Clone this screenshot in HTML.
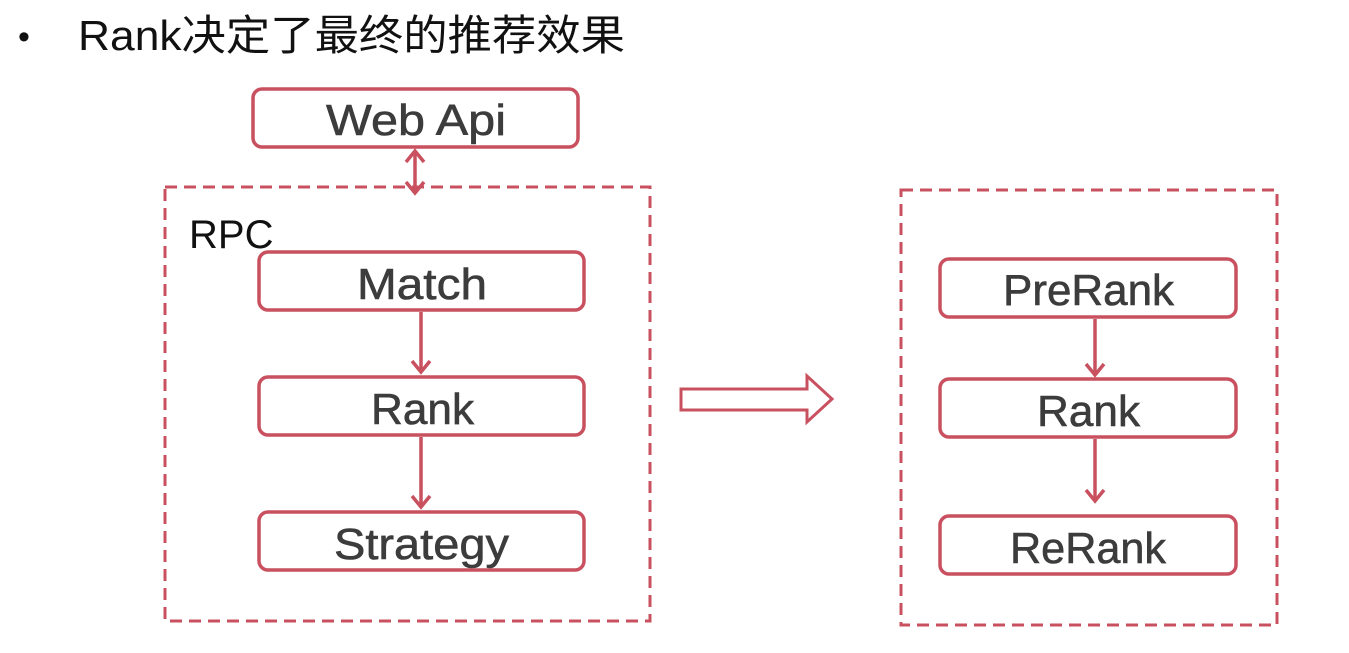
<!DOCTYPE html>
<html><head><meta charset="utf-8"><style>
html,body{margin:0;padding:0;background:#fff;}
svg{display:block;}
text{font-family:"Liberation Sans","Noto Sans CJK SC",sans-serif;}
</style></head><body>
<svg width="1349" height="653" viewBox="0 0 1349 653" xmlns="http://www.w3.org/2000/svg">
<text x="18" y="48" font-size="34" fill="#111">•</text>
<text x="78" y="50" font-size="42" fill="#111" textLength="547" lengthAdjust="spacingAndGlyphs">Rank决定了最终的推荐效果</text>

<g fill="none" stroke="#c9505f" stroke-width="3" stroke-dasharray="12,7">
<rect x="165" y="187" width="485" height="434"/>
<rect x="901" y="190" width="376" height="435"/>
</g>
<text x="189" y="248" font-size="40" fill="#111">RPC</text>

<g fill="#fff" stroke="#c9505f" stroke-width="3.5">
<rect x="253" y="89" width="325" height="58" rx="9"/>
<rect x="259" y="252" width="325" height="58" rx="9"/>
<rect x="259" y="377" width="325" height="58" rx="9"/>
<rect x="259" y="512" width="325" height="58" rx="9"/>
<rect x="940" y="259" width="296" height="58" rx="9"/>
<rect x="940" y="379" width="296" height="58" rx="9"/>
<rect x="940" y="516" width="296" height="58" rx="9"/>
</g>
<g font-size="44" fill="#3c3c3c" stroke="#3c3c3c" stroke-width="0.6" lengthAdjust="spacingAndGlyphs">
<text x="326" y="135" textLength="180" lengthAdjust="spacingAndGlyphs">Web Api</text>
<text x="357" y="299" textLength="130" lengthAdjust="spacingAndGlyphs">Match</text>
<text x="371" y="424" textLength="103" lengthAdjust="spacingAndGlyphs">Rank</text>
<text x="334" y="559" textLength="175" lengthAdjust="spacingAndGlyphs">Strategy</text>
<text x="1003" y="305" textLength="171" lengthAdjust="spacingAndGlyphs">PreRank</text>
<text x="1037" y="426" textLength="103" lengthAdjust="spacingAndGlyphs">Rank</text>
<text x="1010" y="563" textLength="156" lengthAdjust="spacingAndGlyphs">ReRank</text>
</g>

<g stroke="#c9505f" stroke-width="3.5" fill="none">
<line x1="415" y1="151" x2="415" y2="193"/>
<path d="M406,162 L415,151 L424,162"/>
<path d="M406,182 L415,193 L424,182"/>
<line x1="421" y1="312" x2="421" y2="372"/>
<path d="M412,361 L421,372 L430,361"/>
<line x1="421" y1="437" x2="421" y2="507"/>
<path d="M412,496 L421,507 L430,496"/>
<line x1="1095" y1="319" x2="1095" y2="375"/>
<path d="M1086,364 L1095,375 L1104,364"/>
<line x1="1095" y1="439" x2="1095" y2="501"/>
<path d="M1086,490 L1095,501 L1104,490"/>
<path d="M681,389 L807,389 L807,376 L832,399 L807,422 L807,410 L681,410 Z" stroke-width="3"/>
</g>
</svg>
</body></html>
